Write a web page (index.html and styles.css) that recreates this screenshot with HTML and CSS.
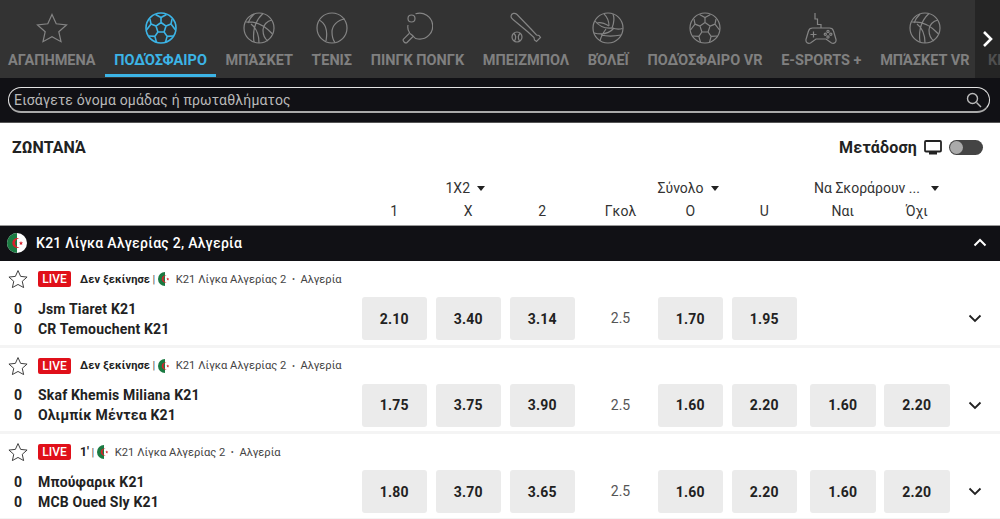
FILE: index.html
```html
<!DOCTYPE html>
<html lang="el">
<head>
  <meta charset="UTF-8">
  <title>Ζωντανά</title>
  <link rel="stylesheet" href="styles.css">
</head>
<body>

  <svg class="defs" width="0" height="0">
    <symbol id="ic-football" viewBox="0 0 32 32">
      <circle cx="16" cy="16" r="15"/>
      <path d="M16 10.500l5 3.600-1.900 5.900h-6.200L11 14.100zM16 10.500V5.500M21 14.100l5-2M19.100 20l3 4.400M12.900 20l-3 4.400M11 14.100l-5-2"/>
      <path d="M10.500 2.500l5.500 3 5.500-3M26 12.100l1-5M30.500 18L26 12.100M22.100 24.400l6-.4M22.100 24.400l-1.600 6M9.900 24.400l1.600 6M9.900 24.400l-6-.4M6 12.100l-1-5M1.500 18L6 12.100"/>
    </symbol>
    <symbol id="ic-basket" viewBox="0 0 32 32">
      <circle cx="16" cy="16" r="15"/>
      <path d="M2.500 10c8-1 18 2 27 12M11 2c-3 3-5 6-6 9M20 1.500C14 7 9 16 11 30M8 12c4 3 8 9 8 19M29 8c-5 1-9 5-9 10 0 5 2 9 5 11"/>
    </symbol>
    <symbol id="ic-tennis" viewBox="0 0 32 32">
      <circle cx="16" cy="16" r="15"/>
      <path d="M3 8c6 3 9 10 7 21"/>
      <path d="M29 7c-8 1-13 7-13 13 0 4 1 8 3 10.500"/>
    </symbol>
    <symbol id="ic-ping" viewBox="0 0 32 32">
      <path d="M14.500 1.800a13 13 0 1 1 2.500 25.200c-2 0-3.500-1-4.500-2.500l-1 .5-5.500 5.500c-1.500 1.500-5-1.800-3.500-3.300l5.500-5.500 .5-1.200c-1.500-2-2-5-1.500-7.500"/>
      <path d="M12.500 24.500c-1-1-2.200-2-3.500-3"/>
      <circle cx="10.500" cy="6.500" r="3.500"/>
    </symbol>
    <symbol id="ic-bat" viewBox="0 0 32 32">
      <path d="M1 4C1.500 1 5 .5 7 2.500l14 14.500 5.500 6 2.500.5 1.500 2-4 4-2-1.500-.5-2.500-6-5.500L3 7.500C1.500 6.500.8 5.500 1 4z"/>
      <circle cx="7" cy="25" r="5"/>
      <path d="M4 21.500c2 2 2 5 .5 7.500M10 21.500c-2 2-2 5-.5 7.500"/>
    </symbol>
    <symbol id="ic-volley" viewBox="0 0 32 32">
      <circle cx="16" cy="16" r="15"/>
      <path d="M12 1.800c3 3 5 7 5 12M21 2c2 5 1 9-1 14 3 1 7 1.500 10.500 .5"/>
      <path d="M3 9c4 5 9 8 17 7M2 21c8 2 15 1 20-5M17 14c-5-3-9-4-12-3M8 29c1-5 3-8 6-12M29 23c-5 1-12 2-20 0"/>
    </symbol>
    <symbol id="ic-pad" viewBox="0 0 32 32">
      <path d="M7.500 16h17c2 0 3.500 1 4 3l2.500 8.500c.5 3-2 4.500-4.500 3.500L21 27H11l-5.500 4C3 32 .5 30.500 1 27.500L3.500 19c.5-2 2-3 4-3z"/>
      <path d="M16 16v-3.500h-3.500V7H10V1M8.500 19.500v6M5.500 22.500h6"/>
      <circle cx="23" cy="19.500" r="1.100"/><circle cx="23" cy="25" r="1.100"/>
      <circle cx="20.300" cy="22.300" r="1.100"/><circle cx="25.800" cy="22.300" r="1.100"/>
    </symbol>
    <symbol id="ic-star" viewBox="0 0 32 32">
      <path d="M16 2.500l4.200 9.300 10.300 1.100-7.700 6.800 2.200 10L16 24.700l-9 5 2.200-10-7.700-6.800 10.300-1.100z"/>
    </symbol>
    <symbol id="ic-flag" viewBox="0 0 20 20">
      <circle cx="10" cy="10" r="10" fill="#fff" stroke="none"/>
      <path d="M10 0a10 10 0 0 0 0 20z" fill="#1b7a42" stroke="none"/>
      <path d="M12.500 5.500a5 5 0 1 0 0 9 4 4 0 1 1 0-9z" fill="#d8212c" stroke="none"/>
      <path d="M14 8l.6 1.400 1.500.1-1.200 1 .4 1.500-1.300-.8-1.300.8.400-1.500-1.200-1 1.500-.1z" fill="#d8212c" stroke="none"/>
    </symbol>
  </svg>

  <nav class="sports">
    <a class="sport"><svg class="sport-icon"><use href="#ic-star"/></svg><span>ΑΓΑΠΗΜΕΝΑ</span></a>
    <a class="sport active"><svg class="sport-icon"><use href="#ic-football"/></svg><span>ΠΟΔΌΣΦΑΙΡΟ</span></a>
    <a class="sport"><svg class="sport-icon"><use href="#ic-basket"/></svg><span>ΜΠΆΣΚΕΤ</span></a>
    <a class="sport"><svg class="sport-icon"><use href="#ic-tennis"/></svg><span>ΤΈΝΙΣ</span></a>
    <a class="sport"><svg class="sport-icon"><use href="#ic-ping"/></svg><span>ΠΙΝΓΚ ΠΟΝΓΚ</span></a>
    <a class="sport"><svg class="sport-icon"><use href="#ic-bat"/></svg><span>ΜΠΕΙΖΜΠΟΛ</span></a>
    <a class="sport"><svg class="sport-icon"><use href="#ic-volley"/></svg><span>ΒΌΛΕΪ</span></a>
    <a class="sport"><svg class="sport-icon"><use href="#ic-football"/></svg><span>ΠΟΔΌΣΦΑΙΡΟ VR</span></a>
    <a class="sport"><svg class="sport-icon"><use href="#ic-pad"/></svg><span>E-SPORTS +</span></a>
    <a class="sport"><svg class="sport-icon"><use href="#ic-basket"/></svg><span>ΜΠΆΣΚΕΤ VR</span></a>
    <a class="sport"><svg class="sport-icon"></svg><span>ΚΡΙΚΕΤ</span></a>
    <div class="sports-next">
      <svg width="12" height="18" viewBox="0 0 12 18"><path d="M2 2l7 7-7 7"/></svg>
    </div>
  </nav>

  <div class="search-bar">
    <div class="search-box">
      <span>Εισάγετε όνομα ομάδας ή πρωταθλήματος</span>
      <svg width="16" height="16" viewBox="0 0 16 16"><circle cx="6.500" cy="6.500" r="5"/><path d="M10.500 10.500l4.500 4.500"/></svg>
    </div>
  </div>

  <div class="live-head">
    <h2>ΖΩΝΤΑΝΆ</h2>
    <div class="stream">
      <span>Μετάδοση</span>
      <svg width="18" height="15" viewBox="0 0 18 15"><rect x="1" y="1" width="16" height="10.500" rx="1"/><path class="tv-foot" d="M5 12h8v2.500H5z"/></svg>
      <div class="toggle"><div class="knob"></div></div>
    </div>
  </div>

  <div class="columns">
    <div class="col-titles">
      <div class="group group-3"><span>1X2</span><i class="caret"></i></div>
      <div class="group group-2"><span>Σύνολο</span><i class="caret"></i></div>
      <div class="group group-last"><span>Να Σκοράρουν ...</span><i class="caret"></i></div>
    </div>
    <div class="markets">
      <div class="odds"><span class="col">1</span><span class="col">Χ</span><span class="col">2</span></div>
      <span class="goal">Γκολ</span>
      <div class="odds"><span class="col">O</span><span class="col">U</span></div>
      <div class="odds extra"><span class="col">Ναι</span><span class="col">Όχι</span></div>
    </div>
  </div>

  <div class="league">
    <svg class="league-flag"><use href="#ic-flag"/></svg>
    <span>K21 Λίγκα Αλγερίας 2, Αλγερία</span>
    <svg class="league-toggle" width="14" height="9" viewBox="0 0 14 9"><path d="M1.500 7.500L7 2l5.500 5.500"/></svg>
  </div>

  <div class="match">
    <div class="match-meta">
      <svg class="fav"><use href="#ic-star"/></svg>
      <span class="live">LIVE</span>
      <b>Δεν ξεκίνησε</b><em>|</em>
      <svg class="mini-flag"><use href="#ic-flag"/></svg>
      <span>K21 Λίγκα Αλγερίας 2</span><em class="dot">•</em><span>Αλγερία</span>
    </div>
    <div class="match-main">
      <div class="teams">
        <div class="team"><b>0</b><span>Jsm Tiaret K21</span></div>
        <div class="team"><b>0</b><span>CR Temouchent K21</span></div>
      </div>
      <div class="markets">
        <div class="odds"><button>2.10</button><button>3.40</button><button>3.14</button></div>
        <span class="goal">2.5</span>
        <div class="odds"><button>1.70</button><button>1.95</button></div>
      </div>
      <svg class="more" width="14" height="9" viewBox="0 0 14 9"><path d="M1.500 1.500L7 7l5.500-5.500"/></svg>
    </div>
  </div>

  <div class="match">
    <div class="match-meta">
      <svg class="fav"><use href="#ic-star"/></svg>
      <span class="live">LIVE</span>
      <b>Δεν ξεκίνησε</b><em>|</em>
      <svg class="mini-flag"><use href="#ic-flag"/></svg>
      <span>K21 Λίγκα Αλγερίας 2</span><em class="dot">•</em><span>Αλγερία</span>
    </div>
    <div class="match-main">
      <div class="teams">
        <div class="team"><b>0</b><span>Skaf Khemis Miliana K21</span></div>
        <div class="team"><b>0</b><span>Ολιμπίκ Μέντεα K21</span></div>
      </div>
      <div class="markets">
        <div class="odds"><button>1.75</button><button>3.75</button><button>3.90</button></div>
        <span class="goal">2.5</span>
        <div class="odds"><button>1.60</button><button>2.20</button></div>
        <div class="odds extra"><button>1.60</button><button>2.20</button></div>
      </div>
      <svg class="more" width="14" height="9" viewBox="0 0 14 9"><path d="M1.500 1.500L7 7l5.500-5.500"/></svg>
    </div>
  </div>

  <div class="match">
    <div class="match-meta">
      <svg class="fav"><use href="#ic-star"/></svg>
      <span class="live">LIVE</span>
      <b class="minute">1'</b><em>|</em>
      <svg class="mini-flag"><use href="#ic-flag"/></svg>
      <span>K21 Λίγκα Αλγερίας 2</span><em class="dot">•</em><span>Αλγερία</span>
    </div>
    <div class="match-main">
      <div class="teams">
        <div class="team"><b>0</b><span>Μπούφαρικ K21</span></div>
        <div class="team"><b>0</b><span>MCB Oued Sly K21</span></div>
      </div>
      <div class="markets">
        <div class="odds"><button>1.80</button><button>3.70</button><button>3.65</button></div>
        <span class="goal">2.5</span>
        <div class="odds"><button>1.60</button><button>2.20</button></div>
        <div class="odds extra"><button>1.60</button><button>2.20</button></div>
      </div>
      <svg class="more" width="14" height="9" viewBox="0 0 14 9"><path d="M1.500 1.500L7 7l5.500-5.500"/></svg>
    </div>
  </div>

</body>
</html>
```

FILE: styles.css
```css
* { box-sizing: border-box; margin: 0; padding: 0; }

html, body { height: 100%; overflow: hidden; }

body {
  font-family: Roboto, "Liberation Sans", sans-serif;
  background: #fff;
  color: #222;
}

.defs { display: block; height: 0; }

/* sport tabs */
.sports {
  position: relative;
  display: flex;
  height: 78px;
  background: #333;
  overflow: hidden;
}
.sport {
  flex: none;
  display: flex;
  flex-direction: column;
  align-items: center;
  height: 77px;
  padding: 12px 9.33px 0;
  color: #808080;
  font-size: 14.5px;
  font-weight: 700;
  white-space: nowrap;
}
.sport:first-child { padding-left: 8px; }
.sport span { margin-top: 8px; line-height: 18px; }
.sport-icon {
  width: 32px;
  height: 32px;
  fill: none;
  stroke: #858585;
  stroke-width: 1.2;
}
.sport.active {
  color: #3cb4e6;
  border-bottom: 3px solid #3cb4e6;
}
.sport.active .sport-icon { stroke: #3cb4e6; stroke-width: 1.6; }

.sports-next {
  position: absolute;
  top: 0;
  right: 0;
  bottom: 0;
  width: 25px;
  display: flex;
  align-items: center;
  justify-content: center;
  background: rgba(20, 20, 20, .45);
}
.sports-next svg { fill: none; stroke: #fff; stroke-width: 2.6; }

/* search */
.search-bar {
  height: 45px;
  padding: 9px 10px 0 8px;
  background: #111115;
  border-bottom: 1px solid #555;
}
.search-box {
  display: flex;
  align-items: center;
  justify-content: space-between;
  height: 26px;
  padding: 0 7px 0 5px;
  border: 1px solid #e4e4e4;
  border-bottom: 2px solid #aaa;
  border-radius: 13px;
  color: #b9b9b9;
  font-size: 14px;
  letter-spacing: .18px;
}
.search-box svg { fill: none; stroke: #bbb; stroke-width: 1.4; }

/* live header */
.live-head {
  display: flex;
  align-items: center;
  justify-content: space-between;
  height: 47px;
  padding: 1px 17px 0 12px;
}
.live-head h2 { font-size: 16px; font-weight: 700; color: #222; }
.stream {
  display: flex;
  align-items: center;
  font-size: 16px;
  font-weight: 700;
  letter-spacing: .2px;
}
.stream svg { margin-left: 7px; fill: none; stroke: #222; stroke-width: 1.8; }
.stream .tv-foot { fill: #222; stroke: none; }
.toggle {
  width: 34px;
  height: 15px;
  margin-left: 7px;
  padding: 1px;
  border-radius: 8px;
  background: #444;
}
.knob { width: 13px; height: 13px; border-radius: 50%; background: #aaa; }

/* market columns, same grid on the header and the rows */
.markets { display: flex; }
.odds { display: flex; gap: 8.5px; }
.odds.extra { margin-left: 13px; }
.goal {
  flex: none;
  width: 74px;
  margin-left: 8.5px;
  text-align: center;
  font-size: 14px;
  color: #555;
}

.columns {
  height: 55px;
  padding: 9px 0 0 361.5px;
  font-size: 14px;
  color: #333;
}
.col-titles { display: flex; height: 22px; line-height: 18px; align-items: flex-start; }
.group { flex: none; display: flex; align-items: center; }
.group-3 { width: 213.5px; padding-left: 84px; }
.group-2 { width: 139.5px; margin-left: 82.5px; }
.group-last { width: 140px; margin-left: 13px; padding-left: 4px; }
.group-last .caret { margin-left: 11px; }
.caret {
  width: 0;
  height: 0;
  margin-left: 7px;
  border: 4px solid transparent;
  border-top: 5px solid #222;
  border-bottom: 0;
}
.col { flex: none; width: 65.5px; text-align: center; line-height: 21px; }
.columns .goal { line-height: 21px; color: #333; }

/* league bar */
.league {
  display: flex;
  align-items: center;
  height: 36px;
  padding: 0 13px 2px 7px;
  background: #111115;
  border-top: 1px solid #999;
  color: #fff;
  font-size: 14px;
  font-weight: 500;
  letter-spacing: .28px;
}
.league-flag { width: 20px; height: 20px; margin-right: 9px; }
.league-toggle { margin-left: auto; fill: none; stroke: #fff; stroke-width: 2; }

/* match rows */
.match {
  height: 86.5px;
  padding-top: 9px;
  border-bottom: 3px solid #f4f4f4;
}
.match-meta {
  display: flex;
  align-items: center;
  height: 18px;
  padding-left: 8px;
  font-size: 11.2px;
  color: #444;
}
.fav {
  width: 20px;
  height: 20px;
  margin-right: 10px;
  fill: none;
  stroke: #333;
  stroke-width: 1.5;
}
.live {
  width: 33px;
  height: 16px;
  margin-right: 9px;
  border-radius: 2px;
  background: #e0101a;
  color: #fff;
  font-size: 12px;
  font-weight: 500;
  line-height: 16px;
  text-align: center;
}
.match-meta b { font-size: 11px; letter-spacing: .1px; color: #222; }
.match-meta .minute { font-size: 12px; }
.match-meta em { margin: 0 2.5px; font-style: normal; color: #555; }
.match-meta em.dot { margin: 0 5.5px; font-size: 9px; }
.mini-flag { width: 14px; height: 14px; margin: 0 4px 0 0; }

.match-main {
  display: flex;
  align-items: center;
  height: 43px;
  margin-top: 9px;
  padding-left: 12px;
  position: relative;
}
.teams { width: 349.5px; flex: none; }
.team {
  display: flex;
  align-items: center;
  height: 20px;
  font-size: 14px;
  font-weight: 700;
  letter-spacing: .18px;
  color: #222;
}
.team b { width: 26px; padding-left: 2px; font-weight: 700; }
.match-main button {
  flex: none;
  width: 65.5px;
  height: 43px;
  border: none;
  border-radius: 3px;
  background: #ebebeb;
  color: #222;
  font-family: inherit;
  font-size: 14px;
  font-weight: 700;
  letter-spacing: .2px;
}
.match-main .goal { line-height: 43px; }
.more {
  position: absolute;
  right: 18px;
  top: 17px;
  fill: none;
  stroke: #222;
  stroke-width: 1.8;
}
```
